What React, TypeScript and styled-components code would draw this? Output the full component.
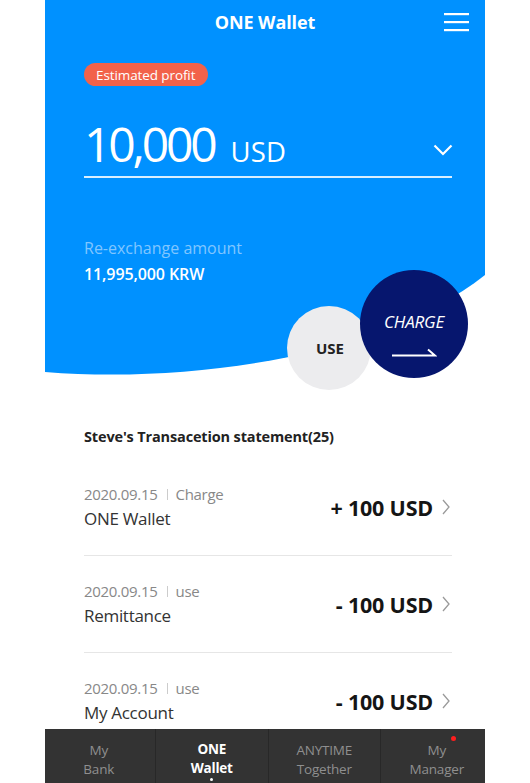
import React from "react";
import styled, { createGlobalStyle } from "styled-components";

const GlobalStyle = createGlobalStyle`
  html, body { margin: 0; padding: 0; background: #ffffff; }
  body {
    font-family: "Open Sans", "Noto Sans", "Noto Sans CJK KR", sans-serif;
    -webkit-font-smoothing: antialiased;
  }
  * { box-sizing: border-box; }
`;

const Screen = styled.div`
  width: 440px;
  height: 100vh;
  margin: 0 auto;
  display: flex;
  flex-direction: column;
  overflow: hidden;
  background: #ffffff;
`;

const Content = styled.main`
  flex: 1;
  min-height: 0;
  overflow: hidden;
`;

const Hero = styled.section`
  position: relative;
  height: 392px;
  color: #ffffff;
`;

const HeroWave = styled.svg`
  position: absolute;
  top: 0;
  left: 0;
  width: 100%;
  height: 100%;
  z-index: 0;
`;

const HeroInner = styled.div`
  position: relative;
  z-index: 1;
`;

const Header = styled.header`
  height: 44px;
  display: grid;
  grid-template-columns: 1fr auto 1fr;
  align-items: center;
`;

const Title = styled.h1`
  grid-column: 2;
  margin: 0;
  font-size: 18px;
  font-weight: 700;
  line-height: 44px;
  letter-spacing: -0.1px;
`;

const MenuButton = styled.button`
  grid-column: 3;
  justify-self: end;
  margin-right: 16px;
  padding: 0;
  border: 0;
  background: none;
  display: flex;
  cursor: pointer;
`;

const HeroBody = styled.div`
  padding: 0 33px 0 39px;
`;

const ProfitPill = styled.span`
  display: inline-flex;
  align-items: center;
  height: 23px;
  margin-top: 19px;
  padding: 0 13px 0 12px;
  border-radius: 12px;
  background: #f2624a;
  color: #ffffff;
  font-size: 13.5px;
  letter-spacing: -0.1px;
`;

const AmountRow = styled.div`
  display: flex;
  align-items: baseline;
  margin-top: 34px;
  padding-bottom: 8px;
  border-bottom: 2px solid rgba(255, 255, 255, 0.85);
`;

const AmountValue = styled.span`
  font-size: 48px;
  line-height: 1;
  font-weight: 400;
  letter-spacing: -3.2px;
`;

const AmountCurrency = styled.span`
  margin-left: 16px;
  font-size: 27.5px;
  line-height: 1;
  letter-spacing: 0.2px;
`;

const DropChevron = styled.svg`
  margin-left: auto;
  margin-right: -1px;
  align-self: center;
  margin-top: 11px;
`;

const LowerRow = styled.div`
  display: flex;
  align-items: flex-start;
  margin-top: 58px;
`;

const ExchangeInfo = styled.div`
  display: flex;
  flex-direction: column;
`;

const ExchangeLabel = styled.span`
  font-size: 16px;
  line-height: 24px;
  color: #80c6ff;
`;

const ExchangeValue = styled.span`
  margin-top: 2px;
  font-size: 16px;
  line-height: 24px;
  font-weight: 600;
  letter-spacing: -0.1px;
`;

const Actions = styled.div`
  display: flex;
  align-items: flex-start;
  margin-left: auto;
  margin-right: -16px;
  margin-top: 34px;
`;

const UseButton = styled.button`
  width: 84px;
  height: 84px;
  margin-top: 36px;
  border: 0;
  border-radius: 50%;
  background: #ececee;
  color: #222222;
  font-family: inherit;
  font-size: 15px;
  font-weight: 700;
  display: flex;
  align-items: center;
  justify-content: center;
  padding: 0 0 0 2px;
  cursor: pointer;
`;

const ChargeButton = styled.button`
  width: 108px;
  height: 108px;
  margin-left: -11px;
  border: 0;
  border-radius: 50%;
  background: #06166e;
  color: #ffffff;
  font-family: inherit;
  display: flex;
  flex-direction: column;
  align-items: center;
  justify-content: flex-start;
  padding: 41px 0 0;
  cursor: pointer;
`;

const ChargeLabel = styled.span`
  font-size: 17px;
  font-style: italic;
  line-height: 22px;
  letter-spacing: -0.2px;
`;

const ChargeArrow = styled.svg`
  margin-top: 15px;
`;

const Statement = styled.section`
  padding: 0 33px 0 39px;
`;

const StatementTitle = styled.h2`
  margin: 35px 0 0;
  font-size: 14.5px;
  line-height: 20px;
  font-weight: 700;
  color: #222222;
  letter-spacing: -0.15px;
`;

const List = styled.ul`
  list-style: none;
  margin: 12px 0 0;
  padding: 0;
`;

const Row = styled.li`
  display: flex;
  align-items: center;
  padding: 25px 0;
  border-bottom: 1px solid #e6e6e6;
`;

const RowText = styled.div`
  display: flex;
  flex-direction: column;
`;

const RowMeta = styled.span`
  display: flex;
  align-items: center;
  font-size: 15px;
  line-height: 20px;
  color: #888888;
  letter-spacing: -0.3px;
`;

const MetaBar = styled.i`
  display: inline-block;
  width: 1px;
  height: 11px;
  margin: 0 8px 0 9px;
  background: #cccccc;
`;

const RowName = styled.span`
  margin-top: 4px;
  font-size: 17px;
  line-height: 22px;
  color: #333333;
  letter-spacing: -0.3px;
`;

const RowAmount = styled.span`
  margin-left: auto;
  font-size: 21.5px;
  font-weight: 700;
  color: #151515;
  letter-spacing: -0.2px;
`;

const RowChevron = styled.svg`
  margin-left: 9px;
  margin-right: 2px;
`;

const Nav = styled.nav`
  flex: none;
  height: 54px;
  width: 450px;
  margin-left: -2.5px;
  display: grid;
  grid-template-columns: repeat(4, 1fr);
  background: #333333;
`;

const Tab = styled.a<{ $active?: boolean }>`
  display: flex;
  flex-direction: column;
  align-items: center;
  justify-content: flex-end;
  padding-bottom: ${(p) => (p.$active ? "2px" : "5px")};
  border-left: 1px solid #282828;
  &:first-child { border-left: 0; }
  color: ${(p) => (p.$active ? "#ffffff" : "#8f8f8f")};
  font-size: 13.5px;
  font-weight: ${(p) => (p.$active ? 700 : 400)};
  line-height: 18.5px;
  letter-spacing: -0.2px;
  text-decoration: none;
  text-align: center;
`;

const TabLine = styled.span`
  position: relative;
  display: block;
`;

const ActiveDot = styled.span`
  width: 3px;
  height: 3px;
  margin-top: 1px;
  border-radius: 50%;
  background: #ffffff;
`;

const Badge = styled.span`
  position: absolute;
  top: -5px;
  right: -10px;
  width: 5px;
  height: 5px;
  border-radius: 50%;
  background: #ff1e1e;
`;

const transactions = [
  { date: "2020.09.15", type: "Charge", name: "ONE Wallet", amount: "+ 100 USD" },
  { date: "2020.09.15", type: "use", name: "Remittance", amount: "- 100 USD" },
  { date: "2020.09.15", type: "use", name: "My Account", amount: "- 100 USD" },
];

export default function App() {
  return (
    <>
      <GlobalStyle />
      <Screen>
        <Content>
          <Hero>
            <HeroWave viewBox="0 0 440 392" preserveAspectRatio="none" aria-hidden>
              <path d="M0 0 H440 V275 C340 355 150 384 0 372 Z" fill="#0091ff" />
            </HeroWave>
            <HeroInner>
              <Header>
                <Title>ONE Wallet</Title>
                <MenuButton aria-label="menu">
                  <svg width="25" height="20" viewBox="0 0 25 20">
                    <rect x="0" y="1" width="25" height="2.2" fill="#fff" />
                    <rect x="0" y="9" width="25" height="2.2" fill="#fff" />
                    <rect x="0" y="17" width="25" height="2.2" fill="#fff" />
                  </svg>
                </MenuButton>
              </Header>
              <HeroBody>
                <ProfitPill>Estimated profit</ProfitPill>
                <AmountRow>
                  <AmountValue>10,000</AmountValue>
                  <AmountCurrency>USD</AmountCurrency>
                  <DropChevron width="20" height="12" viewBox="0 0 20 12">
                    <polyline points="1.5,1.5 10,10 18.5,1.5" fill="none" stroke="#fff" strokeWidth="2.2" />
                  </DropChevron>
                </AmountRow>
                <LowerRow>
                  <ExchangeInfo>
                    <ExchangeLabel>Re-exchange amount</ExchangeLabel>
                    <ExchangeValue>11,995,000 KRW</ExchangeValue>
                  </ExchangeInfo>
                  <Actions>
                    <UseButton>USE</UseButton>
                    <ChargeButton>
                      <ChargeLabel>CHARGE</ChargeLabel>
                      <ChargeArrow width="45" height="9" viewBox="0 0 45 9">
                        <path d="M0 7.5 H43 L36 1.5" fill="none" stroke="#fff" strokeWidth="2" />
                      </ChargeArrow>
                    </ChargeButton>
                  </Actions>
                </LowerRow>
              </HeroBody>
            </HeroInner>
          </Hero>
          <Statement>
            <StatementTitle>Steve's Transacetion statement(25)</StatementTitle>
            <List>
              {transactions.map((t, i) => (
                <Row key={i}>
                  <RowText>
                    <RowMeta>
                      {t.date}
                      <MetaBar />
                      {t.type}
                    </RowMeta>
                    <RowName>{t.name}</RowName>
                  </RowText>
                  <RowAmount>{t.amount}</RowAmount>
                  <RowChevron width="8" height="16" viewBox="0 0 8 16">
                    <polyline points="1,1 7,8 1,15" fill="none" stroke="#9a9a9a" strokeWidth="1.3" />
                  </RowChevron>
                </Row>
              ))}
            </List>
          </Statement>
        </Content>
        <Nav>
          <Tab>
            <TabLine>My</TabLine>
            <TabLine>Bank</TabLine>
          </Tab>
          <Tab $active>
            <TabLine>ONE</TabLine>
            <TabLine>Wallet</TabLine>
            <ActiveDot />
          </Tab>
          <Tab>
            <TabLine>ANYTIME</TabLine>
            <TabLine>Together</TabLine>
          </Tab>
          <Tab>
            <TabLine>
              My
              <Badge />
            </TabLine>
            <TabLine>Manager</TabLine>
          </Tab>
        </Nav>
      </Screen>
    </>
  );
}
